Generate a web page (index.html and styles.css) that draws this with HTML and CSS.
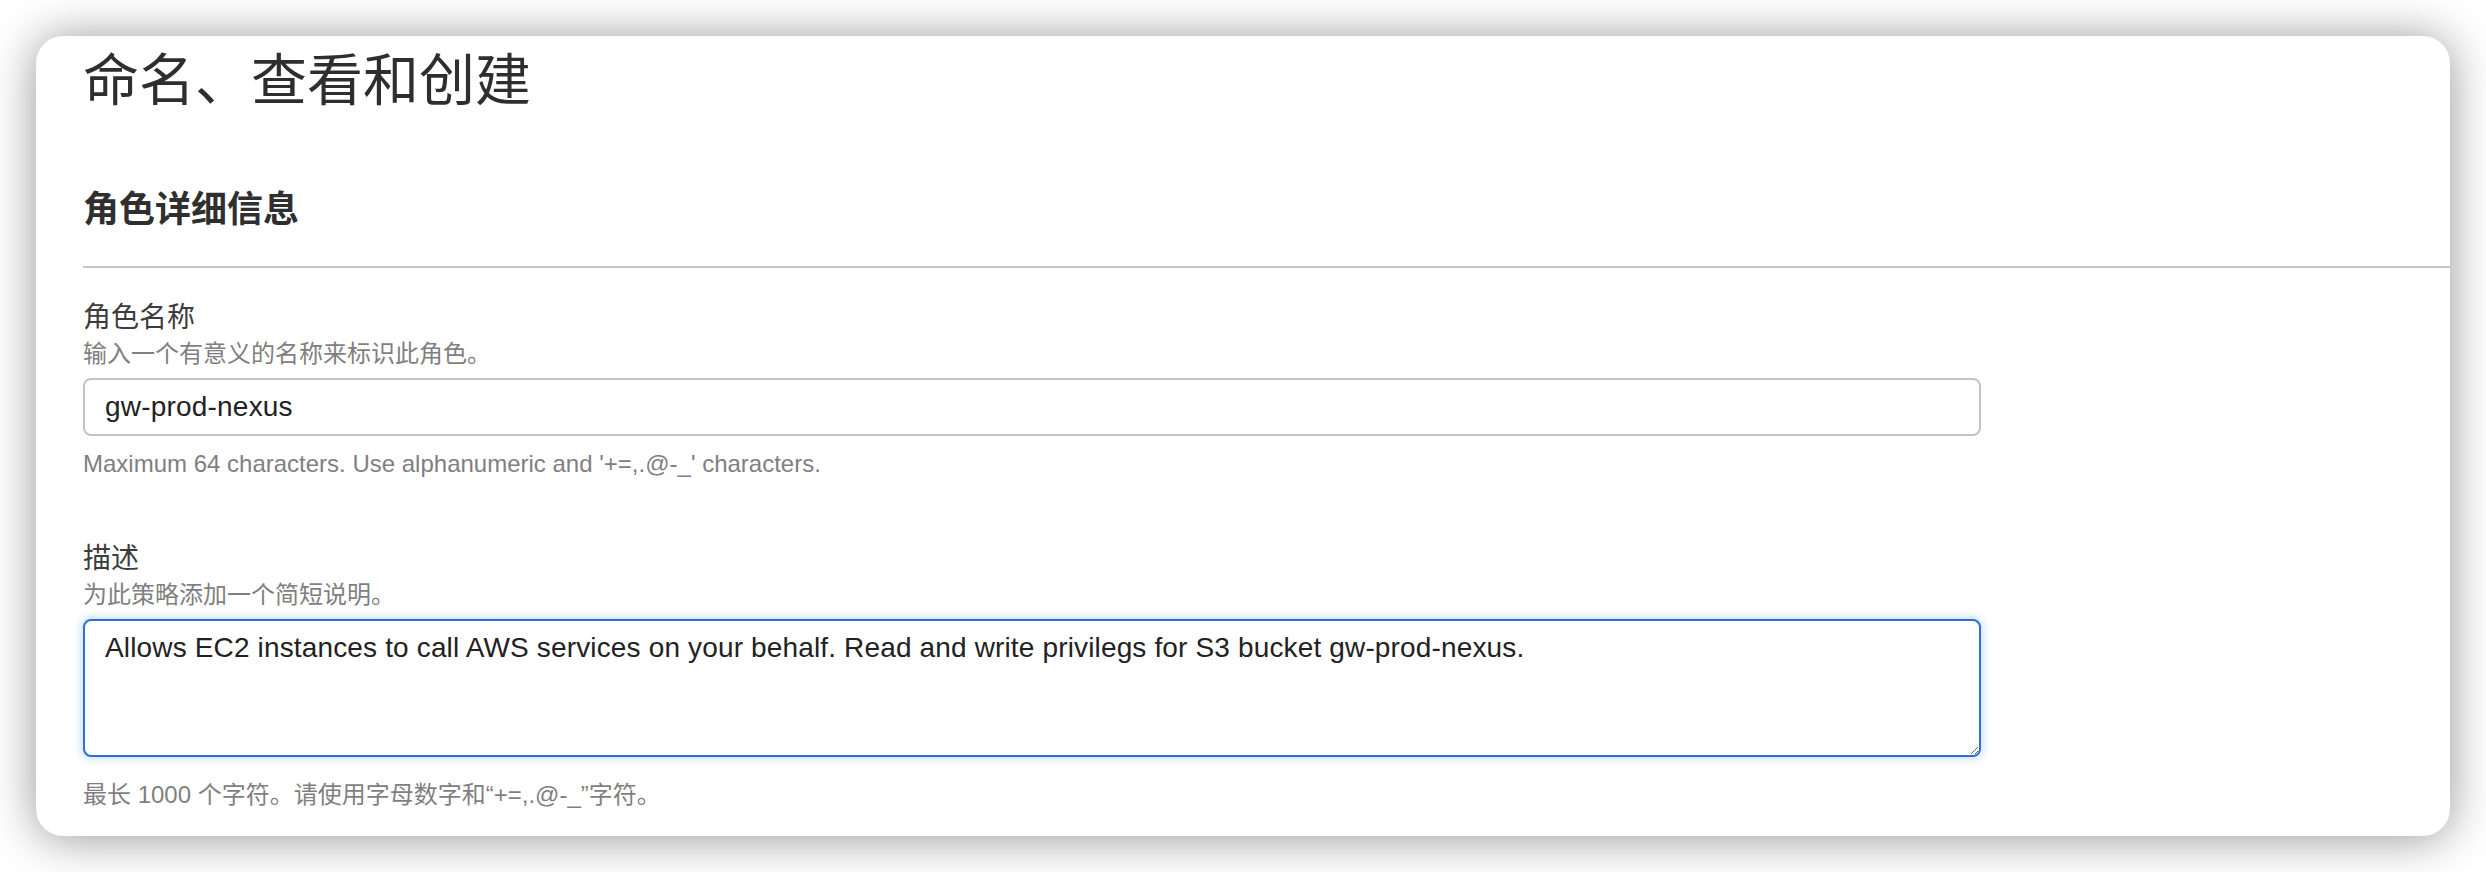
FILE: index.html
```html
<!DOCTYPE html>
<html lang="zh-CN">
<head>
<meta charset="utf-8">
<title>命名、查看和创建</title>
<link rel="stylesheet" href="styles.css">
</head>
<body>
<main class="card">
  <h1 class="page-title">命名、查看和创建</h1>
  <h2 class="section-title">角色详细信息</h2>
  <div class="divider"></div>

  <div class="field field-name">
    <label class="field-label" for="role-name">角色名称</label>
    <div class="field-desc">输入一个有意义的名称来标识此角色。</div>
    <input class="text-input" id="role-name" type="text" value="gw-prod-nexus">
    <div class="field-constraint">Maximum 64 characters. Use alphanumeric and '+=,.@-_' characters.</div>
  </div>

  <div class="field field-desc-block">
    <label class="field-label" for="role-desc">描述</label>
    <div class="field-desc">为此策略添加一个简短说明。</div>
    <textarea class="text-area" id="role-desc">Allows EC2 instances to call AWS services on your behalf. Read and write privilegs for S3 bucket gw-prod-nexus.</textarea>
    <div class="field-constraint constraint-last">最长 1000 个字符。请使用字母数字和“+=,.@-_”字符。</div>
  </div>
</main>
</body>
</html>
```

FILE: styles.css
```css
html, body {
  margin: 0;
  padding: 0;
  background: #ffffff;
}

body {
  padding: 36px;
  font-family: "Liberation Sans", "Noto Sans CJK SC", sans-serif;
  color: #333333;
}

.card {
  display: block;
  box-sizing: border-box;
  height: 800px;
  background: #ffffff;
  border-radius: 27px;
  box-shadow: 0 2px 48px rgba(0, 0, 0, 0.42);
  overflow: hidden;
  padding: 13px 0 0 47px;
}

.page-title {
  margin: 0;
  font-size: 56px;
  line-height: 64px;
  font-weight: 400;
  color: #2e2e2e;
}

.section-title {
  margin: 75px 0 0;
  font-size: 36px;
  line-height: 44px;
  font-weight: 700;
  color: #2f2f2f;
}

.divider {
  margin-top: 34px;
  height: 2px;
  background: #c6c6c6;
}

.field-name {
  margin-top: 32px;
}

.field-desc-block {
  margin-top: 62px;
}

.field-label {
  display: block;
  font-size: 28px;
  line-height: 36px;
  color: #3c3c3c;
}

.field-desc {
  margin-top: 3px;
  font-size: 24px;
  line-height: 30px;
  color: #7f7f7f;
}

.text-input {
  display: block;
  box-sizing: border-box;
  margin-top: 9px;
  width: 1898px;
  height: 58px;
  border: 2px solid #c3c3c3;
  border-radius: 8px;
  padding: 0 20px;
  font-family: "Liberation Sans", "Noto Sans CJK SC", sans-serif;
  font-size: 28px;
  letter-spacing: 0.2px;
  color: #222222;
  background: #ffffff;
  outline: none;
}

.field-constraint {
  margin-top: 13px;
  font-size: 24px;
  line-height: 30px;
  color: #7f7f7f;
}

.text-area {
  display: block;
  box-sizing: border-box;
  margin-top: 9px;
  width: 1898px;
  height: 138px;
  border: 2px solid #2c6fd6;
  border-radius: 8px;
  padding: 11px 20px;
  font-family: "Liberation Sans", "Noto Sans CJK SC", sans-serif;
  font-size: 28px;
  line-height: normal;
  letter-spacing: 0.15px;
  color: #222222;
  background: #ffffff;
  box-shadow: 0 0 10px 2px rgba(70, 135, 230, 0.28);
  outline: none;
}

.constraint-last {
  margin-top: 23px;
}
```
